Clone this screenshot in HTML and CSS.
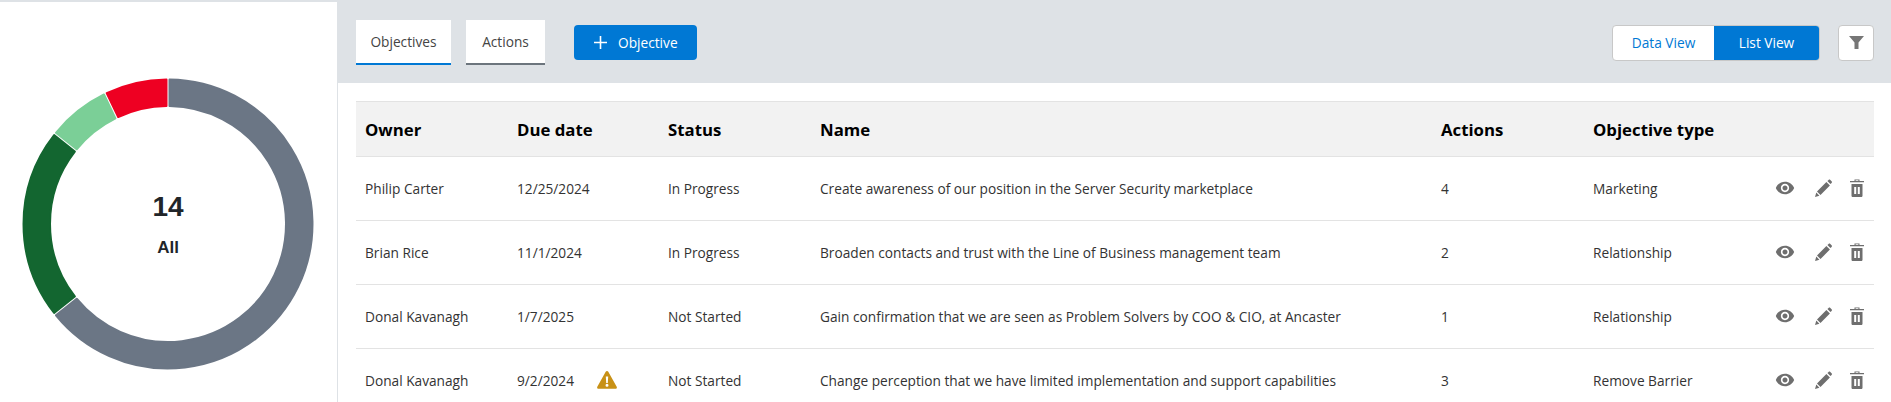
FILE: index.html
```html
<!DOCTYPE html>
<html lang="en">
<head>
  <meta charset="UTF-8">
  <title>Objectives</title>
  <link rel="stylesheet" href="styles.css">
</head>
<body>
  <svg class="sprite" aria-hidden="true">
    <symbol id="i-eye" viewBox="0 0 24 24"><path d="M12 4.5C7 4.5 2.73 7.61 1 12c1.73 4.39 6 7.5 11 7.5s9.27-3.11 11-7.5c-1.73-4.39-6-7.5-11-7.5zM12 17c-2.76 0-5-2.24-5-5s2.24-5 5-5 5 2.24 5 5-2.24 5-5 5zm0-8c-1.66 0-3 1.34-3 3s1.34 3 3 3 3-1.34 3-3-1.34-3-3-3z"/></symbol>
    <symbol id="i-pen" viewBox="0 0 17 18"><path d="M11.4 3.1l3.5 3.5-9.4 9.4L2 12.5zM12.4 2.1l1.2-1.2c.5-.5 1.2-.5 1.7 0l1.3 1.3c.5.5.5 1.2 0 1.7l-1.2 1.2zM1.3 13.6l3.1 3.1L0 18z"/></symbol>
    <symbol id="i-bin" viewBox="0 0 14 18"><path fill-rule="evenodd" d="M4.5 2V.4h5V2H14v1.3H0V2zM5.6 1.3V2h2.8v-.7zM1.5 5h11v11.7c0 .7-.6 1.3-1.3 1.3H2.8c-.7 0-1.3-.6-1.3-1.3zM4.2 8v7h2V8zM7.8 8v7h2V8z"/></symbol>
  </svg>

  <div class="page">
    <aside class="chart-panel">
      <div class="donut">
        <svg class="donut-svg" viewBox="-146 -146 292 292" width="292" height="292">
          <path class="seg seg-grey" d="M1.5 -144.5 A144.5 144.5 0 1 1 -112.03 91.27 L-91.31 74.74 A118 118 0 1 0 1.5 -118 Z"/>
          <path class="seg seg-dark" d="M-113.88 88.94 A144.5 144.5 0 0 1 -113.88 -88.94 L-93.17 -72.4 A118 118 0 0 0 -93.17 72.4 Z"/>
          <path class="seg seg-light" d="M-112.06 -91.24 A144.5 144.5 0 0 1 -64.03 -129.54 L-52.55 -105.66 A118 118 0 0 0 -91.31 -74.74 Z"/>
          <path class="seg seg-red" d="M-61.34 -130.83 A144.5 144.5 0 0 1 -1.5 -144.5 L-1.5 -118 A118 118 0 0 0 -49.83 -106.97 Z"/>
        </svg>
        <div class="donut-label">
          <div class="donut-count">14</div>
          <div class="donut-name">All</div>
        </div>
      </div>
    </aside>

    <main class="content">
      <div class="toolbar">
        <div class="tab tab-active">Objectives</div>
        <div class="tab tab-actions">Actions</div>
        <button class="add-btn">
          <svg class="plus" viewBox="0 0 13 13" width="13" height="13"><path d="M6.5 0v13M0 6.5h13"/></svg>
          Objective
        </button>
        <div class="view-switch">
          <div class="view-opt">Data View</div>
          <div class="view-opt view-on">List View</div>
        </div>
        <button class="filter-btn">
          <svg viewBox="0 0 15 13" width="15" height="13"><path d="M0 0h15L9.5 6.5V13h-4V6.5z"/></svg>
        </button>
      </div>

      <div class="table-wrap">
        <table class="grid">
          <thead>
            <tr>
              <th class="c-owner">Owner</th>
              <th class="c-due">Due date</th>
              <th class="c-status">Status</th>
              <th class="c-name">Name</th>
              <th class="c-actions">Actions</th>
              <th class="c-type">Objective type</th>
              <th class="c-tools"></th>
            </tr>
          </thead>
          <tbody>
            <tr>
              <td>Philip Carter</td>
              <td>12/25/2024</td>
              <td>In Progress</td>
              <td>Create awareness of our position in the Server Security marketplace</td>
              <td>4</td>
              <td>Marketing</td>
              <td class="tools">
                <svg class="ic ic-eye"><use href="#i-eye"/></svg>
                <svg class="ic ic-pen"><use href="#i-pen"/></svg>
                <svg class="ic ic-bin"><use href="#i-bin"/></svg>
              </td>
            </tr>
            <tr>
              <td>Brian Rice</td>
              <td>11/1/2024</td>
              <td>In Progress</td>
              <td>Broaden contacts and trust with the Line of Business management team</td>
              <td>2</td>
              <td>Relationship</td>
              <td class="tools">
                <svg class="ic ic-eye"><use href="#i-eye"/></svg>
                <svg class="ic ic-pen"><use href="#i-pen"/></svg>
                <svg class="ic ic-bin"><use href="#i-bin"/></svg>
              </td>
            </tr>
            <tr>
              <td>Donal Kavanagh</td>
              <td>1/7/2025</td>
              <td>Not Started</td>
              <td>Gain confirmation that we are seen as Problem Solvers by COO &amp; CIO, at Ancaster</td>
              <td>1</td>
              <td>Relationship</td>
              <td class="tools">
                <svg class="ic ic-eye"><use href="#i-eye"/></svg>
                <svg class="ic ic-pen"><use href="#i-pen"/></svg>
                <svg class="ic ic-bin"><use href="#i-bin"/></svg>
              </td>
            </tr>
            <tr>
              <td>Donal Kavanagh</td>
              <td>
                <div class="due-late">
                  <span class="due-text">9/2/2024</span>
                  <svg class="warn" viewBox="0 0 20 18" width="20" height="18"><path fill-rule="evenodd" d="M10 0c.6 0 1 .3 1.3.8l8.4 15c.5.9-.1 2-1.2 2H1.5c-1.1 0-1.7-1.1-1.2-2l8.4-15C9 .3 9.4 0 10 0zM8.8 5.5l.4 6.5h1.6l.4-6.5zM10 12.8a1.5 1.5 0 1 0 0 3 1.5 1.5 0 0 0 0-3z"/></svg>
                </div>
              </td>
              <td>Not Started</td>
              <td>Change perception that we have limited implementation and support capabilities</td>
              <td>3</td>
              <td>Remove Barrier</td>
              <td class="tools">
                <svg class="ic ic-eye"><use href="#i-eye"/></svg>
                <svg class="ic ic-pen"><use href="#i-pen"/></svg>
                <svg class="ic ic-bin"><use href="#i-bin"/></svg>
              </td>
            </tr>
          </tbody>
        </table>
      </div>
    </main>
  </div>
</body>
</html>
```

FILE: styles.css
```css
html, body {
  margin: 0;
  height: 100%;
  overflow: hidden;
}

body {
  background: #fff;
  color: #333;
  font-family: "Open Sans", "Noto Sans", sans-serif;
  font-size: 13.7px;
}

.sprite {
  display: none;
}

.page {
  display: flex;
  height: 400px;
  border-top: 2px solid #dee2e6;
}

.chart-panel {
  width: 338px;
  flex-shrink: 0;
  display: flex;
  justify-content: center;
  padding: 76px 0 0 0;
  box-sizing: border-box;
  border-right: 1px solid #dee2e6;
}

.donut {
  position: relative;
  width: 292px;
  height: 292px;
  margin-right: 1px;
}

.donut-svg {
  display: block;
}

.seg {
  stroke-width: 2;
  stroke-linejoin: round;
}

.seg-grey { fill: #6b7685; stroke: #6b7685; }
.seg-dark { fill: #136630; stroke: #136630; }
.seg-light { fill: #7bcf97; stroke: #7bcf97; }
.seg-red { fill: #ee0022; stroke: #ee0022; }

.donut-label {
  position: absolute;
  inset: 0;
  padding-top: 2px;
  display: flex;
  flex-direction: column;
  align-items: center;
  justify-content: center;
  font-family: "Liberation Sans", Arial, sans-serif;
  font-weight: 700;
  color: #212529;
}

.donut-count {
  font-size: 28px;
  line-height: 30px;
}

.donut-name {
  font-size: 17px;
  line-height: 20px;
  margin-top: 16px;
}

.content {
  flex: 1;
  min-width: 0;
}

.toolbar {
  display: flex;
  align-items: center;
  height: 81px;
  padding: 0 17px 0 18px;
  background: #dee2e6;
  box-sizing: border-box;
}

.tab {
  display: flex;
  align-items: center;
  justify-content: center;
  width: 95px;
  height: 45px;
  margin-right: 15px;
  box-sizing: border-box;
  background: #fff;
  border-bottom: 2px solid #6c757d;
  color: #444;
}

.tab-active {
  border-bottom-color: #0078d4;
}

.tab-actions {
  width: 79px;
}

.add-btn {
  display: flex;
  align-items: center;
  gap: 11px;
  height: 35px;
  width: 123px;
  margin-left: 14px;
  padding: 0 0 0 20px;
  border: none;
  border-radius: 4px;
  background: #0078d4;
  color: #fff;
  font: inherit;
}

.plus {
  fill: none;
  stroke: #fff;
  stroke-width: 1.6;
}

.view-switch {
  display: flex;
  height: 36px;
  margin-left: auto;
  border-radius: 4px;
  overflow: hidden;
  background: #fff;
  border: 1px solid #c8c8c8;
  box-sizing: border-box;
}

.view-opt {
  display: flex;
  align-items: center;
  justify-content: center;
  width: 101px;
  color: #0078d4;
}

.view-on {
  width: 105px;
  background: #0078d4;
  color: #fff;
}

.filter-btn {
  display: flex;
  align-items: center;
  justify-content: center;
  width: 36px;
  height: 36px;
  margin-left: 18px;
  padding: 0;
  border: 1px solid #c8c8c8;
  border-radius: 4px;
  background: #fff;
}

.filter-btn svg {
  fill: #767676;
}

.table-wrap {
  padding: 18px 17px 0 18px;
}

.grid {
  width: 100%;
  border-collapse: collapse;
  table-layout: fixed;
}

.grid th {
  height: 55px;
  padding: 0 9px;
  background: #f2f2f2;
  border-top: 1px solid #e3e3e3;
  border-bottom: 1px solid #e3e3e3;
  box-sizing: border-box;
  color: #000;
  font-size: 16.8px;
  font-weight: 700;
  text-align: left;
}

.grid td {
  height: 64px;
  padding: 0 9px 1px;
  box-sizing: border-box;
  border-bottom: 1px solid #e3e3e3;
  white-space: nowrap;
}

.c-owner { width: 152px; }
.c-due { width: 151px; }
.c-status { width: 152px; }
.c-name { width: 621px; }
.c-actions { width: 152px; }
.c-type { width: 152px; }

.due-late {
  display: flex;
  align-items: center;
  gap: 23px;
}

.warn {
  fill: #c89116;
}

.grid td.tools {
  padding-right: 10px;
  font-size: 0;
  text-align: right;
}

.ic {
  fill: #6e6e6e;
  vertical-align: middle;
}

.ic-eye {
  width: 20px;
  height: 20px;
}

.ic-pen {
  width: 17px;
  height: 18px;
  margin-left: 20px;
}

.ic-bin {
  width: 14px;
  height: 18px;
  margin-left: 18px;
}
```
